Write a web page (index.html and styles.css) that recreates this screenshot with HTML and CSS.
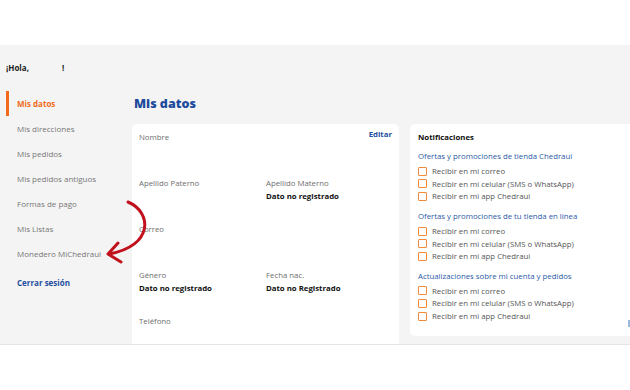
FILE: index.html
```html
<!DOCTYPE html>
<html lang="es">
<head>
  <meta charset="UTF-8" />
  <meta name="viewport" content="width=device-width, initial-scale=1.0"/>
  <title>Mis datos</title>
  <link rel="stylesheet" href="styles.css">
</head>
<body>
  <div class="top"></div>

  <div class="page">
    <aside class="sidebar">
      <p class="hello">¡Hola, <span class="name"></span>!</p>
      <nav class="menu">
        <a class="item active">Mis datos</a>
        <a class="item">Mis direcciones</a>
        <a class="item">Mis pedidos</a>
        <a class="item">Mis pedidos antiguos</a>
        <a class="item">Formas de pago</a>
        <a class="item">Mis Listas</a>
        <a class="item">Monedero MiChedraui</a>
      </nav>
      <a class="logout">Cerrar sesión</a>
    </aside>

    <main class="main">
      <h1>Mis datos</h1>
      <div class="cards">
        <section class="card data">
          <a class="edit">Editar</a>
          <div class="grid">
            <div class="field full"><span class="label">Nombre</span></div>
            <div class="field"><span class="label">Apellido Paterno</span></div>
            <div class="field"><span class="label">Apellido Materno</span><span class="value">Dato no registrado</span></div>
            <div class="field full"><span class="label">Correo</span></div>
            <div class="field"><span class="label">Género</span><span class="value">Dato no registrado</span></div>
            <div class="field"><span class="label">Fecha nac.</span><span class="value">Dato no Registrado</span></div>
            <div class="field full"><span class="label">Teléfono</span></div>
          </div>
        </section>

        <section class="card notif">
          <h2>Notificaciones</h2>
          <div class="group">
            <h3>Ofertas y promociones de tienda Chedraui</h3>
            <label class="check"><span class="box"></span>Recibir en mi correo</label>
            <label class="check"><span class="box"></span>Recibir en mi celular (SMS o WhatsApp)</label>
            <label class="check"><span class="box"></span>Recibir en mi app Chedraui</label>
          </div>
          <div class="group">
            <h3>Ofertas y promociones de tu tienda en línea</h3>
            <label class="check"><span class="box"></span>Recibir en mi correo</label>
            <label class="check"><span class="box"></span>Recibir en mi celular (SMS o WhatsApp)</label>
            <label class="check"><span class="box"></span>Recibir en mi app Chedraui</label>
          </div>
          <div class="group">
            <h3>Actualizaciones sobre mi cuenta y pedidos</h3>
            <label class="check"><span class="box"></span>Recibir en mi correo</label>
            <label class="check"><span class="box"></span>Recibir en mi celular (SMS o WhatsApp)</label>
            <label class="check"><span class="box"></span>Recibir en mi app Chedraui</label>
          </div>
          <span class="mark"></span>
        </section>
      </div>
    </main>

    <!-- annotation arrow pointing at Monedero -->
    <svg class="arrow" width="60" height="80" viewBox="95 190 60 80">
      <path d="M128 202 C152 212 154 246 109 254" fill="none" stroke="#c1111d" stroke-width="3" stroke-linecap="round"/>
      <path d="M118 243 L108 254 L121 262" fill="none" stroke="#c1111d" stroke-width="3" stroke-linecap="round" stroke-linejoin="round"/>
    </svg>
  </div>
</body>
</html>
```

FILE: styles.css
```css
body {
  margin: 0;
  font-family: "Open Sans", "Noto Sans", sans-serif;
  background: #fff;
  color: #333;
}
.top {
  height: 45px;
}
.page {
  position: relative;
  display: flex;
  height: 299px;
  background: #f4f4f4;
  border-bottom: 1px solid #e4e4e4;
  overflow: hidden;
}
.sidebar {
  width: 132px;
  flex-shrink: 0;
  padding-left: 6px;
  box-sizing: border-box;
}
.hello {
  margin: 17px 0 0;
  font-size: 8px;
  font-weight: 700;
  color: #222;
  line-height: 12px;
}
.hello .name {
  display: inline-block;
  width: 31px;
}
.menu {
  display: flex;
  flex-direction: column;
  margin-top: 17px;
}
.item {
  display: block;
  height: 25px;
  line-height: 25px;
  padding-left: 8px;
  border-left: 3px solid transparent;
  font-size: 8px;
  color: #777;
}
.item.active {
  border-left-color: #f26b1d;
  color: #f26b1d;
  font-weight: 700;
}
.logout {
  display: block;
  margin-top: 4px;
  padding-left: 11px;
  line-height: 25px;
  font-size: 8px;
  font-weight: 700;
  color: #1f4ea0;
}
.main {
  flex: 1;
  min-width: 0;
}
.main h1 {
  margin: 50px 0 0 2px;
  font-size: 12.5px;
  line-height: 18px;
  font-weight: 800;
  color: #1d4b9c;
}
.cards {
  display: flex;
  gap: 11px;
  margin-top: 11px;
  align-items: flex-start;
}
.card {
  background: #fff;
  border-radius: 5px;
  box-sizing: border-box;
}
.data {
  position: relative;
  width: 267px;
  height: 240px;
  padding: 7px 7px 0;
  border-radius: 5px 5px 0 0;
}
.edit {
  position: absolute;
  top: 5px;
  right: 7px;
  font-size: 7.8px;
  font-weight: 700;
  color: #1f4ea0;
}
.grid {
  display: grid;
  grid-template-columns: 127px 1fr;
}
.field {
  display: flex;
  flex-direction: column;
  height: 46px;
}
.field.full {
  grid-column: 1 / 3;
}
.label {
  font-size: 7.8px;
  line-height: 13px;
  color: #6e6e6e;
}
.value {
  font-size: 7.8px;
  line-height: 13px;
  font-weight: 700;
  color: #111;
}
.notif {
  position: relative;
  flex: 1;
  height: 212px;
  padding: 7px 8px 0;
  border-radius: 5px 0 0 5px;
}
.notif h2 {
  margin: 0;
  font-size: 7.8px;
  line-height: 13px;
  font-weight: 700;
  color: #111;
}
.group {
  margin-top: 6px;
}
.group + .group {
  margin-top: 7px;
}
.group h3 {
  margin: 0 0 2px;
  font-size: 7.8px;
  line-height: 13px;
  font-weight: 400;
  color: #2a5aa6;
}
.check {
  display: flex;
  align-items: center;
  height: 12.6px;
  font-size: 7.8px;
  color: #555;
}
.box {
  width: 7px;
  height: 7px;
  margin-right: 5px;
  border: 1px solid #f48a3c;
  border-radius: 1px;
}
.mark {
  position: absolute;
  right: 0;
  top: 196px;
  width: 2px;
  height: 7px;
  background: #9fb9dc;
}
.arrow {
  position: absolute;
  left: 95px;
  top: 145px;
}
```
